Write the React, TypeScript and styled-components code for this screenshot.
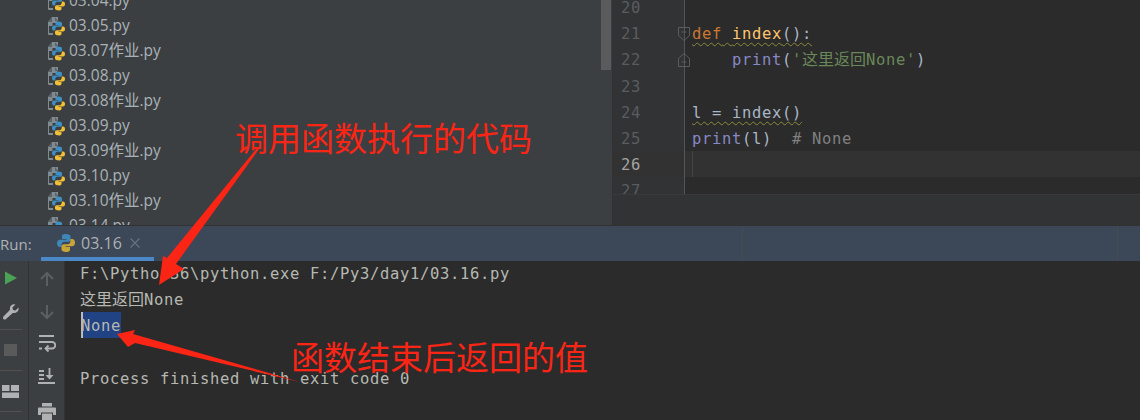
import React from "react";
import styled, { createGlobalStyle } from "styled-components";

const Global = createGlobalStyle`
  html, body { margin: 0; padding: 0; background: #2b2b2b; }
  body { width: 1140px; height: 420px; overflow: hidden; }
`;

const MONO = `"DejaVu Sans Mono", "Noto Sans CJK SC", monospace`;

const Page = styled.div`
  position: relative;
  width: 1140px;
  height: 420px;
  overflow: hidden;
  display: flex;
  flex-direction: column;
`;

const Top = styled.div`
  display: flex;
  height: 225px;
  flex: none;
`;

const Project = styled.div`
  width: 612px;
  flex: none;
  display: flex;
  background: #3c3f41;
  overflow: hidden;
`;

const FileList = styled.ul`
  list-style: none;
  margin: -12px 0 0;
  padding: 0 0 0 48px;
  flex: 1;
`;

const FileRow = styled.li`
  height: 25px;
  display: flex;
  align-items: center;
  gap: 4px;
  font: 15.5px/25px "Open Sans", "Noto Sans CJK SC", sans-serif;
  color: #a9b2b8;
`;

const PyGlyph = styled.svg`
  position: relative;
  top: 1px;
`;

const ScrollTrack = styled.div`
  width: 11px;
  flex: none;
`;

const ScrollThumb = styled.div`
  width: 10px;
  height: 70px;
  background: #595b5d;
`;

const Editor = styled.div`
  flex: 1;
  display: flex;
  flex-direction: column;
  background: #313335;
  border-left: 1px solid #323232;
`;

const EditorBody = styled.div`
  height: 195px;
  flex: none;
  display: flex;
  overflow: hidden;
  background: #2b2b2b;
  border-bottom: 1px solid #3a3a3a;
  box-sizing: border-box;
`;

const Gutter = styled.div`
  width: 71px;
  flex: none;
  background: #313335;
  border-right: 1px solid #555;
`;

const GutterInner = styled.div`
  margin-top: -6px;
`;

const LineNo = styled.div<{ $current?: boolean }>`
  position: relative;
  height: 26.2px;
  padding-left: 8px;
  font: 15.5px/28.2px ${MONO};
  letter-spacing: 0.67px;
  color: ${(p) => (p.$current ? "#a4a3a3" : "#5a5d5f")};
  background: ${(p) => (p.$current ? "#323232" : "transparent")};
`;

const FoldMark = styled.svg`
  position: absolute;
  left: 65px;
  top: 7px;
  z-index: 1;
`;

const Code = styled.div`
  flex: 1;
  margin-top: -6px;
`;

const CodeLine = styled.div<{ $current?: boolean }>`
  height: 26.2px;
  padding-left: 7px;
  white-space: pre;
  font: 15.5px/28.2px ${MONO};
  letter-spacing: 0.67px;
  color: #a9b7c6;
  background: ${(p) => (p.$current ? "#323232" : "transparent")};
`;

const Caret = styled.span`
  display: inline-block;
  width: 1px;
  height: 26px;
  vertical-align: top;
  background: #444444;
`;

const Wavy = styled.span`
  text-decoration: underline wavy #8a8a3c 1px;
  text-underline-offset: 3px;
`;

const Tok = styled.span<{ $c: string }>`
  color: ${(p) => p.$c};
`;

const Cjk = styled.span`
  letter-spacing: 0;
  font-size: 16px;
`;

const EditorFoot = styled.div`
  flex: 1;
`;

const TabBar = styled.div`
  height: 36px;
  flex: none;
  display: flex;
  align-items: stretch;
  background: #3c4857;
  border-top: 1px solid #323232;
  box-sizing: border-box;
  color: #afb1b3;
  font: 16px "Open Sans", sans-serif;
`;

const RunLabel = styled.div`
  width: 41px;
  flex: none;
  display: flex;
  align-items: center;
  box-sizing: border-box;
  font-size: 15px;
`;

const Tab = styled.div`
  width: 113px;
  flex: none;
  display: flex;
  align-items: center;
  gap: 6px;
  padding: 2px 0 0 16px;
  box-sizing: border-box;
  border-bottom: 4px solid #4a88c7;
`;

const CloseX = styled.svg`
  margin-left: 2px;
`;

const TabFill = styled.div<{ $w: string }>`
  flex: ${(p) => p.$w};
  border-right: 1px solid #464b50;
`;

const TabEnd = styled.div`
  width: 22px;
  flex: none;
`;

const Run = styled.div`
  flex: 1;
  display: flex;
  min-height: 0;
`;

const Rail = styled.div`
  width: 28px;
  flex: none;
  background: #3c3f41;
  border-right: 1px solid #323232;
  display: flex;
  flex-direction: column;
  align-items: flex-start;
`;

const Rail2 = styled.div`
  width: 36px;
  flex: none;
  box-sizing: border-box;
  background: #3c3f41;
  border-right: 1px solid #323232;
  display: flex;
  flex-direction: column;
  align-items: center;
  overflow: hidden;
`;

const RailCell = styled.div<{ $h: number }>`
  height: ${(p) => p.$h}px;
  width: 100%;
  flex: none;
  display: flex;
  align-items: center;
  justify-content: flex-start;
  padding-left: 2px;
  box-sizing: border-box;
`;

const RailRule = styled.div`
  width: 22px;
  height: 1px;
  flex: none;
  background: #515151;
`;

const Rail2Cell = styled.div<{ $h: number; $pt?: number }>`
  height: ${(p) => p.$h}px;
  width: 100%;
  flex: none;
  display: flex;
  align-items: center;
  justify-content: center;
  box-sizing: border-box;
  padding-top: ${(p) => p.$pt ?? 0}px;
`;

const Console = styled.div`
  flex: 1;
  background: #2b2b2b;
  padding: 0 0 0 15px;
`;

const ConsoleLine = styled.div`
  height: 26.25px;
  white-space: pre;
  font: 15.5px/26.25px ${MONO};
  letter-spacing: 0.67px;
  color: #b6b8b2;
`;

const Selected = styled.span`
  display: inline-block;
  position: relative;
  top: -1.5px;
  margin-left: 1px;
  height: 26px;
  line-height: 28px;
  vertical-align: top;
  background: #214283;
  box-shadow: inset 2px 0 0 #bbbbbb;
`;

const Note = styled.div<{ $x: number; $y: number }>`
  position: absolute;
  left: ${(p) => p.$x}px;
  top: ${(p) => p.$y}px;
  font: 33px/40px "Noto Sans CJK SC", sans-serif;
  color: #fb2516;
  white-space: nowrap;
`;

const Overlay = styled.svg`
  position: absolute;
  left: 0;
  top: 0;
  pointer-events: none;
`;

const PyIcon = () => (
  <PyGlyph width="17" height="19" viewBox="0 0 17 19">
    <path d="M4 0h6v4h-1v2H4.500v3H1V16H5v2H1a1 1 0 0 1-1-1V5z" fill="#7f8b91" />
    <path d="M7 0l3 4H7z" fill="#596267" />
    <path d="M0 5l4-5v5z" fill="#596267" />
    <path d="M10.500 4.500c-2 0-3 .6-3 1.800V8h3v.6H6c-1.400 0-2 1-2 2.400s.6 2.600 2 2.600h1.300v-1.700c0-1.200 1-2.100 2.200-2.100h2.700c1 0 1.800-.8 1.800-1.800V6.300c0-1.100-1.300-1.800-3.500-1.800z" fill="#3d8fc4" />
    <path d="M10.500 18.500c2 0 3-.6 3-1.800V15h-3v-.6H15c1.400 0 2-1 2-2.400s-.6-2.600-2-2.600h-1.300v1.700c0 1.200-1 2.100-2.200 2.100H8.800c-1 0-1.800.8-1.800 1.800v1.500c0 1.100 1.300 1.800 3.500 1.800z" fill="#f2c037" />
  </PyGlyph>
);

const TabPy = () => (
  <svg width="18" height="18" viewBox="0 0 18 18">
    <path d="M9 0C5.500 0 5 1.200 5 2.500V5h4.500v.7H3C1.200 5.700 0 7 0 9.200s1 3.800 3 3.800h1.600v-2.400c0-1.500 1.300-2.800 2.900-2.800h3.600c1.300 0 2.400-1.100 2.400-2.400V2.500C13.500 1 11.700 0 9 0z" fill="#3f87b8" />
    <path d="M9 18c3.500 0 4-1.200 4-2.500V13H8.500v-.7H15c1.800 0 3-1.300 3-3.500S17 5 15 5h-1.600v2.400c0 1.500-1.300 2.800-2.900 2.800H6.900c-1.300 0-2.400 1.100-2.400 2.400v2.900C4.500 17 6.300 18 9 18z" fill="#c9a437" />
  </svg>
);

const files = ["03.04.py", "03.05.py", "03.07作业.py", "03.08.py", "03.08作业.py", "03.09.py", "03.09作业.py", "03.10.py", "03.10作业.py", "03.14.py"];

export default function App() {
  return (
    <Page>
      <Global />
      <Top>
        <Project>
          <FileList>
            {files.map((f) => (
              <FileRow key={f}>
                <PyIcon />
                <span>{f}</span>
              </FileRow>
            ))}
          </FileList>
          <ScrollTrack>
            <ScrollThumb />
          </ScrollTrack>
        </Project>
        <Editor>
          <EditorBody>
            <Gutter>
              <GutterInner>
                {[20, 21, 22, 23, 24, 25, 26, 27].map((n) => (
                  <LineNo key={n} $current={n === 26}>
                    {n}
                    {n === 21 && (
                      <FoldMark width="12" height="15" viewBox="0 0 12 15">
                        <path d="M.5.500h11v8L6 13.500.5 8.500z" fill="none" stroke="#5a5d5f" />
                        <path d="M3.500 5h5" stroke="#5a5d5f" />
                      </FoldMark>
                    )}
                    {n === 22 && (
                      <FoldMark width="12" height="15" viewBox="0 0 12 15">
                        <path d="M.5 13.500h11v-8L6 .5.500 5.500z" fill="none" stroke="#5a5d5f" />
                        <path d="M3.500 9h5" stroke="#5a5d5f" />
                      </FoldMark>
                    )}
                  </LineNo>
                ))}
              </GutterInner>
            </Gutter>
            <Code>
              <CodeLine> </CodeLine>
              <CodeLine>
                <Wavy>
                  <Tok $c="#cc7832">def</Tok> <Tok $c="#ffc66d">index</Tok>():
                </Wavy>
              </CodeLine>
              <CodeLine>
                {"    "}
                <Tok $c="#8888c6">print</Tok>(<Tok $c="#6a8759">'<Cjk>这里返回</Cjk>None'</Tok>)
              </CodeLine>
              <CodeLine> </CodeLine>
              <CodeLine>
                <Wavy>l = index()</Wavy>
              </CodeLine>
              <CodeLine>
                <Tok $c="#8888c6">print</Tok>(l)  <Tok $c="#808080"># None</Tok>
              </CodeLine>
              <CodeLine $current><Caret /></CodeLine>
              <CodeLine> </CodeLine>
            </Code>
          </EditorBody>
          <EditorFoot />
        </Editor>
      </Top>
      <TabBar>
        <RunLabel>Run:</RunLabel>
        <Tab>
          <TabPy />
          <span>03.16</span>
          <CloseX width="10" height="10" viewBox="0 0 10 10">
            <path d="M.5.500l9 9M9.500.500l-9 9" stroke="#66727d" strokeWidth="1.200" />
          </CloseX>
        </Tab>
        <TabFill $w="589" />
        <TabFill $w="375" />
        <TabEnd />
      </TabBar>
      <Run>
        <Rail>
          <RailCell $h={34}>
            <svg width="16" height="16" viewBox="0 0 16 16"><path d="M3 1.500v13L15 8z" fill="#4aa256" /></svg>
          </RailCell>
          <RailCell $h={34}>
            <svg width="18" height="18" viewBox="0 0 18 18"><path d="M16.500 4.500l-3 3-2.500-.6-.6-2.500 3-3c-2.600-.8-5.200.8-5.500 3.400-.1.700 0 1.300.2 1.900L1.500 13.500c-.7.700-.7 1.800 0 2.500s1.800.7 2.500 0l6.800-6.100c2.900.9 5.800-1.300 5.900-4.200 0-.3-.1-.5-.2-.7z" fill="#afb1b3" /></svg>
          </RailCell>
          <RailRule />
          <RailCell $h={40}>
            <svg width="16" height="14" viewBox="0 0 16 14"><rect x="2" y="1" width="13" height="12" fill="#5a5a5a" /></svg>
          </RailCell>
          <RailRule />
          <RailCell $h={40}>
            <svg width="17" height="13" viewBox="0 0 17 13"><path d="M0 0h7.500v6H0zM9 0h8v6H9zM0 7.500h17V13H0z" fill="#afb1b3" /></svg>
          </RailCell>
          <RailRule />
        </Rail>
        <Rail2>
          <Rail2Cell $h={36}>
            <svg width="14" height="16" viewBox="0 0 14 16"><path d="M7 15V2M1 8l6-6 6 6" fill="none" stroke="#5c5f61" strokeWidth="2" /></svg>
          </Rail2Cell>
          <Rail2Cell $h={30}>
            <svg width="14" height="16" viewBox="0 0 14 16"><path d="M7 1v13M1 8l6 6 6-6" fill="none" stroke="#5c5f61" strokeWidth="2" /></svg>
          </Rail2Cell>
          <Rail2Cell $h={34}>
            <svg width="18" height="18" viewBox="0 0 18 18"><path d="M1 1h15M1 7h13a2.700 2.700 0 0 1 0 6.500H8M1 13.500h3" fill="none" stroke="#afb1b3" strokeWidth="1.800" /><path d="M10.500 10.500l-3 3 3 3" fill="none" stroke="#afb1b3" strokeWidth="1.800" /></svg>
          </Rail2Cell>
          <Rail2Cell $h={30}>
            <svg width="18" height="16" viewBox="0 0 18 16"><path d="M1 3h5M1 7h5M1 11h5M0 15h17M11.500 0v10" fill="none" stroke="#afb1b3" strokeWidth="1.800" /><path d="M7.500 7h8l-4 4.500z" fill="#afb1b3" /></svg>
          </Rail2Cell>
          <Rail2Cell $h={36} $pt={5}>
            <svg width="18" height="17" viewBox="0 0 18 17"><path d="M4 0h10v3.500H4zM1 4.500h16a1 1 0 0 1 1 1V12h-3V9.500H3V12H0V5.500a1 1 0 0 1 1-1zM4 10.500h10V17H4z" fill="#afb1b3" /></svg>
          </Rail2Cell>
        </Rail2>
        <Console>
          <ConsoleLine>F:\Python36\python.exe F:/Py3/day1/03.16.py</ConsoleLine>
          <ConsoleLine><Cjk>这里返回</Cjk>None</ConsoleLine>
          <ConsoleLine><Selected>None</Selected></ConsoleLine>
          <ConsoleLine> </ConsoleLine>
          <ConsoleLine>Process finished with exit code 0</ConsoleLine>
        </Console>
      </Run>
      <Note $x={235} $y={117}>调用函数执行的代码</Note>
      <Note $x={291} $y={336}>函数结束后返回的值</Note>
      <Overlay width="1140" height="420" viewBox="0 0 1140 420">
        <polygon points="259,149 176,264 184,269 159,285 163,256 167,258 257,148" fill="#fb2516" />
        <polygon points="300,382 135,343 128,347 117,334 135,330 133,334" fill="#fb2516" />
      </Overlay>
    </Page>
  );
}
